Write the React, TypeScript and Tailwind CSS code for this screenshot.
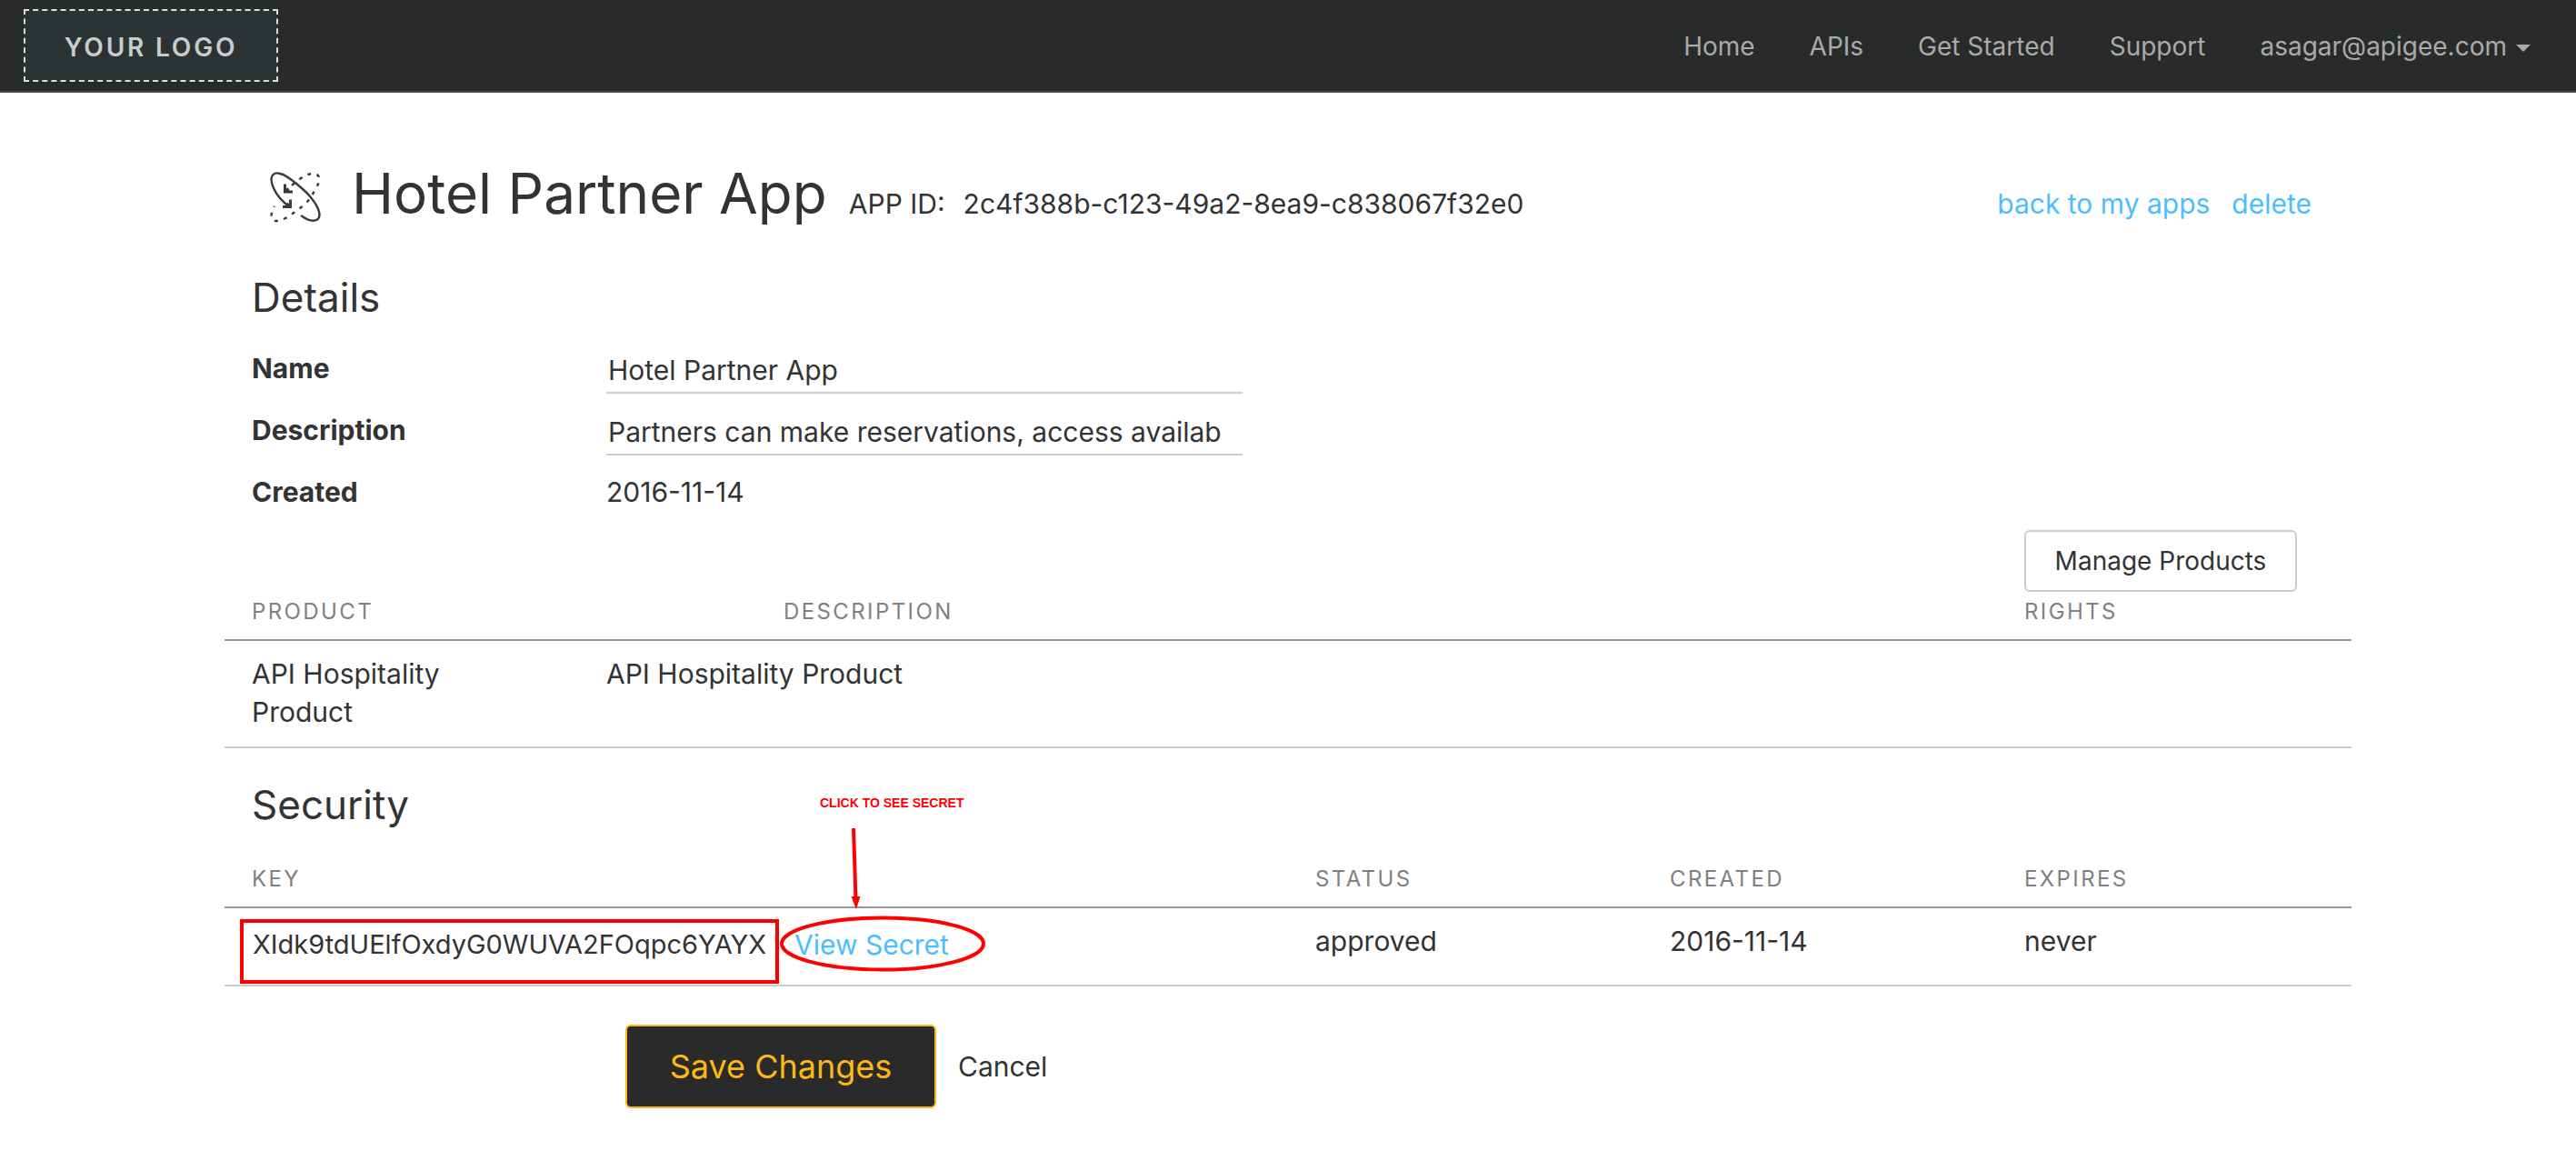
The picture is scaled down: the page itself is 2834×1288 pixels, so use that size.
import React from "react";

const navLinks = ["Home", "APIs", "Get Started", "Support"];

function Columns() {
  return (
    <colgroup>
      {Array.from({ length: 12 }, (_, i) => (
        <col key={i} className="w-1/12" />
      ))}
    </colgroup>
  );
}

function HeadCell({ span, children }: { span: number; children: React.ReactNode }) {
  return (
    <th
      scope="col"
      colSpan={span}
      className="border-b-2 border-[#979797] px-[30px] pt-[6px] pb-[14px] text-left text-2xl leading-8 font-normal tracking-widest text-[#808080] uppercase"
    >
      {children}
    </th>
  );
}

function Cell({ span, children }: { span: number; children?: React.ReactNode }) {
  return (
    <td colSpan={span} className="border-b-2 border-[#cccccc] pt-[15px] pr-[60px] pb-[17px] pl-[30px] align-top">
      {children}
    </td>
  );
}

function AppIcon() {
  return (
    <svg viewBox="0 0 60 60" className="h-[60px] w-[60px] shrink-0" fill="none" stroke="#3a3a3a" strokeWidth="2.4" aria-hidden="true">
      <path d="M24 39C16 33 9 25 6 18C3 11 3 7 4.500 4.500C6 1.500 10 1 13 2C19 3 25 8 31 13C37 18 42 22 46 27C51 33 55 39 56 44C57 48 56 51 54 52.500C50 55 43 53 36 48" />
      <path d="M26 15C31 10 36 7 39 5C44 3 48 1 51 2C56 3 57 7 56 10C55 14 54 16 52 19C49 25 46 30 42 34C38 38 35 40 32 42C27 46 23 49 19 51C15 53 12 54 9 54C5 54 3 51 3.500 48C4 44 5 41 7 38" strokeDasharray="4 6.500" />
      <path d="M18.500 13.500V22H27M18.500 22L22.500 18.500M16 38.500H24.500V30.500M24.500 38.500L20.500 35" strokeWidth="3" />
    </svg>
  );
}

export default function App() {
  return (
    <div className="min-h-screen bg-white font-['Inter',sans-serif] text-[30px] leading-[42px] text-[#333333]">
      <header className="flex items-center justify-between border-b-2 border-[#4a4b4b] bg-[#292b2a] py-[10px] pr-[50px] pl-[26px]">
        <a href="#home" className="flex h-20 w-[280px] items-center justify-center border-2 border-dashed border-[#dcdede] bg-[#2c3335] pt-1 text-[28px] font-semibold tracking-widest text-[#c9cccc]">
          YOUR LOGO
        </a>
        <nav className="flex items-center gap-[60px] pt-[2px] text-[28px] text-[#a9aaaa]">
          {navLinks.map((label) => (
            <a key={label} href="#nav">{label}</a>
          ))}
          <button type="button" className="flex items-center gap-[10px]">
            asagar@apigee.com
            <svg viewBox="0 0 16 8" className="mt-1 h-2 w-4" fill="currentColor" aria-hidden="true">
              <path d="M0 0H16L8 8Z" />
            </svg>
          </button>
        </nav>
      </header>

      <main className="mx-auto max-w-[2340px] pt-[75px] pb-[70px]">
        <div className="flex items-baseline justify-between pr-11 pl-12">
          <div className="flex items-baseline">
            <div className="self-end"><AppIcon /></div>
            <h1 className="ml-8 text-[62px] leading-[72px]">Hotel Partner App</h1>
            <p className="ml-6">APP ID:</p>
            <p className="ml-5">2c4f388b-c123-49a2-8ea9-c838067f32e0</p>
          </div>
          <div className="flex gap-6 text-[#4dbdff]">
            <a href="#apps">back to my apps</a>
            <a href="#delete">delete</a>
          </div>
        </div>

        <section className="mt-[50px]">
          <h2 className="px-[30px] text-[44px] leading-[56px]">Details</h2>
          <div className="mt-[29px] grid grid-cols-12 grid-rows-[68px_68px_63px]">
            <label htmlFor="app-name" className="col-span-2 pl-[30px] font-bold">Name</label>
            <div className="col-span-10 pl-[30px]">
              <input id="app-name" defaultValue="Hotel Partner App" className="block h-[49px] w-[700px] border-b-2 border-[#cccccc] px-[2px] pb-[2px] outline-none" />
            </div>
            <label htmlFor="app-description" className="col-span-2 pl-[30px] font-bold">Description</label>
            <div className="col-span-10 pl-[30px]">
              <input id="app-description" defaultValue="Partners can make reservations, access availab" className="block h-[49px] w-[700px] border-b-2 border-[#cccccc] px-[2px] pb-[2px] outline-none" />
            </div>
            <div className="col-span-2 pl-[30px] font-bold">Created</div>
            <div className="col-span-10 pl-[30px]">2016-11-14</div>
          </div>
        </section>

        <section>
          <div className="flex justify-end pr-[60px]">
            <button type="button" className="h-[68px] w-[300px] rounded-md border-2 border-[#cccccc] bg-white text-[28px]">Manage Products</button>
          </div>
          <table className="w-full table-fixed border-separate border-spacing-0">
            <Columns />
            <thead>
              <tr>
                <HeadCell span={3}>Product</HeadCell>
                <HeadCell span={7}>Description</HeadCell>
                <HeadCell span={2}>Rights</HeadCell>
              </tr>
            </thead>
            <tbody>
              <tr>
                <Cell span={2}>API Hospitality Product</Cell>
                <Cell span={8}>API Hospitality Product</Cell>
                <Cell span={2} />
              </tr>
            </tbody>
          </table>
        </section>

        <section className="mt-[34px]">
          <h2 className="px-[30px] text-[44px] leading-[56px]">Security</h2>
          <table className="mt-8 w-full table-fixed border-separate border-spacing-0">
            <Columns />
            <thead>
              <tr>
                <HeadCell span={6}>Key</HeadCell>
                <HeadCell span={2}>Status</HeadCell>
                <HeadCell span={2}>Created</HeadCell>
                <HeadCell span={2}>Expires</HeadCell>
              </tr>
            </thead>
            <tbody>
              <tr>
                <td colSpan={6} className="border-b-2 border-[#cccccc] pt-3 pb-[1px] pl-[17px] align-top">
                  <div className="flex items-start">
                    <span className="flex h-[71px] w-[593px] justify-center border-4 border-[#ff0000] pt-[3px] text-[29px] whitespace-nowrap">
                      XIdk9tdUElfOxdyG0WUVA2FOqpc6YAYX
                    </span>
                    <span className="relative mt-[7px] ml-[17px]">
                      <a href="#secret" className="text-[#4dbdff]">View Secret</a>
                      <span className="absolute -top-[145px] left-7 text-sm leading-5 font-bold whitespace-nowrap text-[#ff0000] font-['Liberation_Sans',sans-serif]">
                        CLICK TO SEE SECRET
                      </span>
                      <svg viewBox="0 0 226 160" className="pointer-events-none absolute -top-[108px] -left-4 h-[160px] w-[226px] max-w-none" fill="none" stroke="#ff0000" strokeWidth="4" aria-hidden="true">
                        <path d="M81 1L83.500 80" />
                        <path d="M78.500 76H88.500L84 90Z" fill="#ff0000" stroke="none" />
                        <ellipse cx="113" cy="128" rx="111" ry="28.500" />
                      </svg>
                    </span>
                  </div>
                </td>
                <Cell span={2}>approved</Cell>
                <Cell span={2}>2016-11-14</Cell>
                <Cell span={2}>never</Cell>
              </tr>
            </tbody>
          </table>
        </section>

        <div className="mt-[42px] grid grid-cols-12">
          <div className="col-span-9 col-start-3 flex items-center gap-6 pl-[51px]">
            <button type="button" className="h-[92px] w-[342px] rounded-md border-2 border-[#fdb813] bg-[#292b2a] text-[36px] text-[#fdb813]">Save Changes</button>
            <a href="#cancel">Cancel</a>
          </div>
        </div>
      </main>
    </div>
  );
}
